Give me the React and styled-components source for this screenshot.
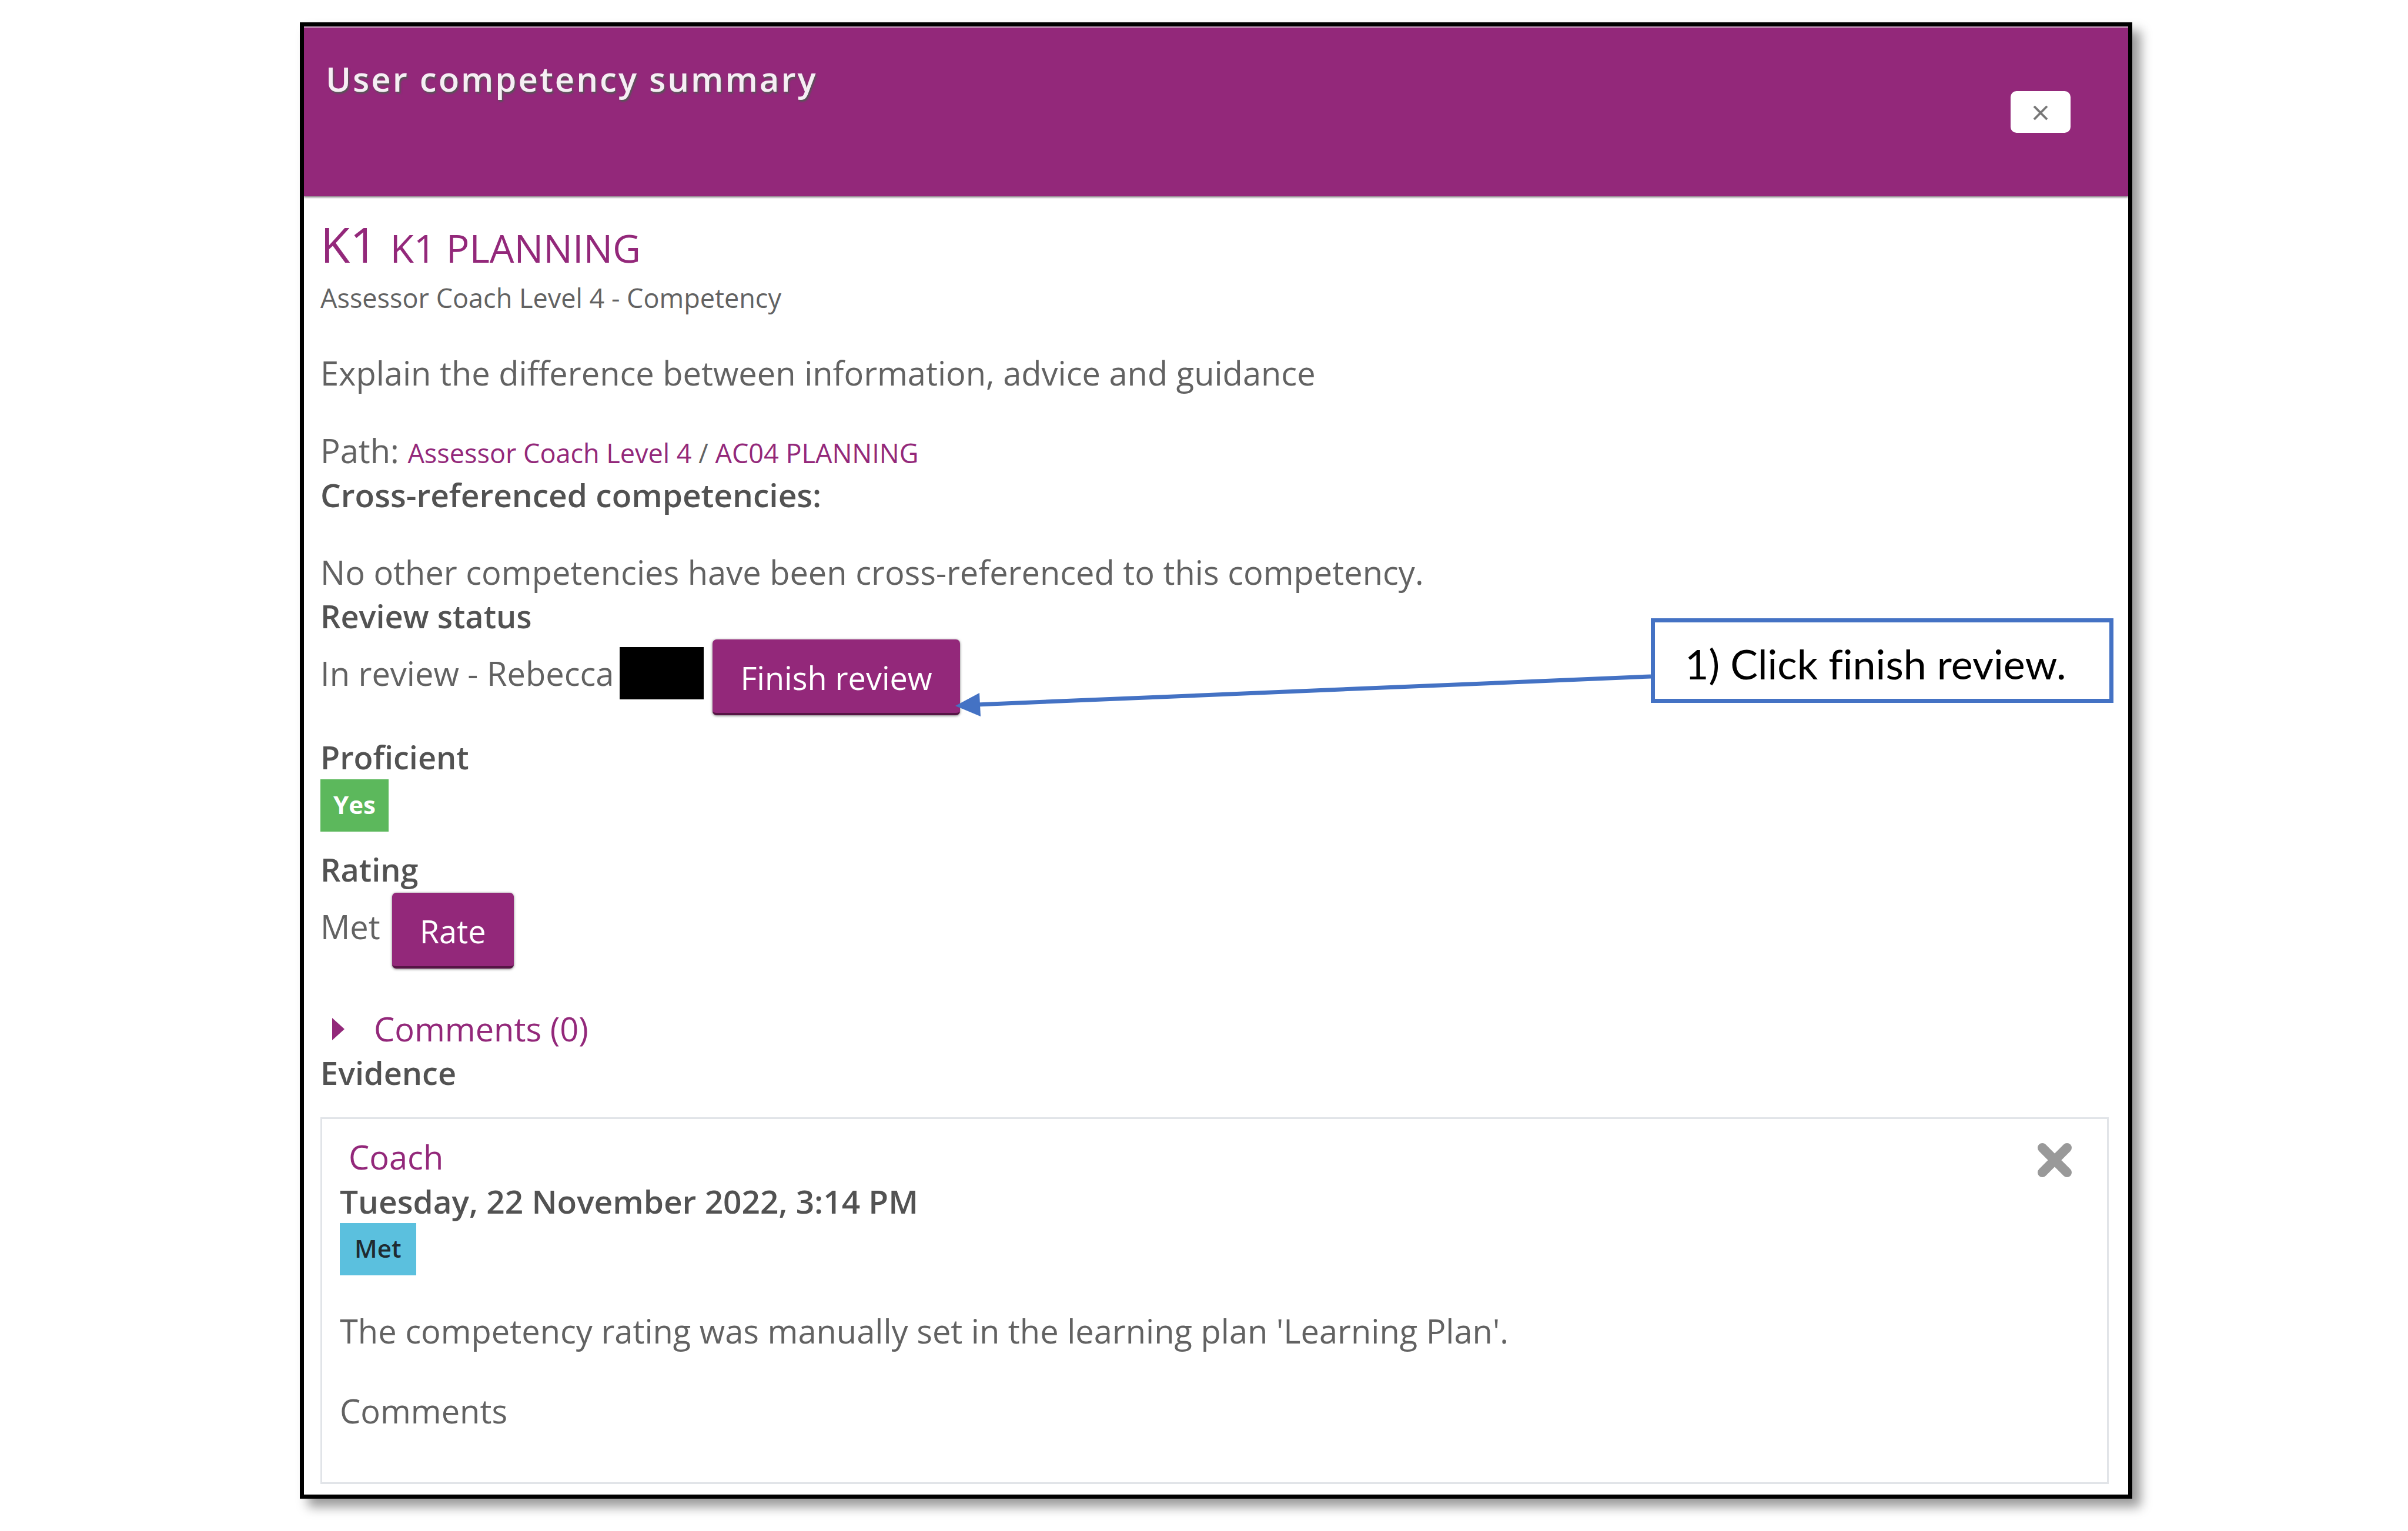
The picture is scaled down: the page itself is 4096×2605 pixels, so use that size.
import React from "react";
import styled, { createGlobalStyle } from "styled-components";

const color = {
  brand: "#93287a",
  brandDark: "#561545",
  text: "#626262",
  heading: "#525252",
  line: "#e1e4e8",
  callout: "#4472c4",
};

const GlobalStyle = createGlobalStyle`
  *, *::before, *::after { box-sizing: border-box; }
  body {
    margin: 0;
    background: #fff;
    color: ${color.text};
    font: 400 56px/75px "Open Sans", "Noto Sans", sans-serif;
  }
  h1, h2, h3, p { margin: 0; }
  button { font: inherit; cursor: pointer; }
`;

const Page = styled.div`
  padding: 38px 469px 51px 510px;
`;

const Dialog = styled.main`
  background: #fff;
  border: 7px solid #000;
  box-shadow: 14px 14px 18px rgba(0, 0, 0, 0.4);
`;

const Header = styled.header`
  display: flex;
  justify-content: space-between;
  align-items: flex-start;
  padding: 47px 98px 108px 37px;
  background: ${color.brand};
  border-top: 2px solid #cfa9c6;
  box-shadow: 0 2px 3px rgba(0, 0, 0, 0.45);
`;

const Title = styled.h1`
  font-size: 58px;
  font-weight: 600;
  line-height: 80px;
  letter-spacing: 3px;
  color: #f6eef4;
  text-shadow: 2px 3px 3px #555;
`;

const CloseButton = styled.button`
  width: 102px;
  height: 71px;
  margin-top: 61px;
  padding: 0;
  border: 0;
  border-radius: 10px;
  background: #fff;
  color: #777;
  line-height: 71px;
`;

const Content = styled.div`
  padding: 31px 33px 18px 28px;
`;

const Name = styled.h2`
  margin-bottom: 9px;
  font-size: 82px;
  font-weight: 400;
  line-height: 100px;
  color: ${color.brand};
`;

const ShortName = styled.span`
  font-size: 66px;
  line-height: 1;
`;

const Framework = styled.p`
  font-size: 45px;
  line-height: 66px;
`;

const Paragraph = styled.p`
  margin-top: ${(p) => p.$space || 57}px;
`;

const Crumbs = styled.span`
  font-size: 45px;
  line-height: 1;
`;

const Link = styled.a`
  color: ${color.brand};
  text-decoration: none;
`;

const Section = styled.section`
  margin-top: ${(p) => p.$space || 0}px;
`;

const Label = styled.h3`
  font-size: ${(p) => (p.$large ? 55 : 54)}px;
  font-weight: 600;
  color: ${color.heading};
`;

const ActionRow = styled.div`
  position: relative;
  display: flex;
  align-items: center;
  gap: ${(p) => p.$gap}px;
  margin-top: 2px;
`;

const Status = styled.div`
  display: flex;
  align-items: center;
  gap: 10px;
  padding-bottom: 14px;
`;

const Redaction = styled.span`
  width: 143px;
  height: 89px;
  background: #000;
`;

const ActionButton = styled.button`
  padding: 28px 47px 22px;
  border: 0;
  border-bottom: 4px solid ${color.brandDark};
  border-radius: 7px;
  background: ${color.brand};
  box-shadow: 0 1px 4px rgba(0, 0, 0, 0.5);
  color: #fff;
  font-size: 54px;
  white-space: nowrap;
`;

const Badge = styled.span`
  display: block;
  width: fit-content;
  padding: 0 ${(p) => (p.$info ? 25 : 22)}px 4px;
  background: ${(p) => (p.$info ? "#5bc0de" : "#5cb85c")};
  color: ${(p) => (p.$info ? "#1f2b30" : "#fff")};
  font-size: 42px;
  font-weight: ${(p) => (p.$info ? 600 : 700)};
  line-height: 85px;
`;

const Toggle = styled.a`
  display: flex;
  align-items: center;
  gap: 50px;
  padding-left: 20px;
  color: ${color.brand};
  text-decoration: none;
`;

const Caret = styled.svg`
  width: 21px;
  height: 38px;
  fill: currentColor;
`;

const EvidenceCard = styled.article`
  margin-top: 38px;
  padding: 27px 30px 84px;
  border: 3px solid ${color.line};
`;

const CardHead = styled.div`
  display: flex;
  justify-content: space-between;
  align-items: flex-start;
  height: 75px;
  padding: 0 29px 0 15px;
`;

const DeleteButton = styled.button`
  padding: 13px 0 0;
  border: 0;
  background: none;
  color: #999;
  line-height: 0;

  svg {
    width: 60px;
    height: 60px;
    fill: none;
    stroke: currentColor;
    stroke-width: 16;
    stroke-linecap: round;
  }
`;

const Annotation = styled.aside`
  position: absolute;
  top: -36px;
  left: 1080px;
  right: -8px;
  display: flex;
  height: 144px;
`;

const Arrow = styled.svg`
  flex: 1;
  min-width: 0;
  height: 100%;
  overflow: visible;
`;

const Callout = styled.p`
  width: 787px;
  padding: 25px 51px;
  border: 7px solid ${color.callout};
  background: #fff;
  color: #000;
  font-family: Lato, "Open Sans", sans-serif;
  font-size: 70px;
  line-height: 90px;
  font-variant-ligatures: none;
  white-space: nowrap;
`;

export default function App() {
  return (
    <Page>
      <GlobalStyle />
      <Dialog>
        <Header>
          <Title>User competency summary</Title>
          <CloseButton type="button" aria-label="Close">×</CloseButton>
        </Header>

        <Content>
          <Name>
            K1 <ShortName>K1 PLANNING</ShortName>
          </Name>
          <Framework>Assessor Coach Level 4 - Competency</Framework>

          <Paragraph>Explain the difference between information, advice and guidance</Paragraph>
          <Paragraph>
            Path:{" "}
            <Crumbs>
              <Link href="#framework">Assessor Coach Level 4</Link> /{" "}
              <Link href="#planning">AC04 PLANNING</Link>
            </Crumbs>
          </Paragraph>

          <Section>
            <Label $large>Cross-referenced competencies:</Label>
            <Paragraph>No other competencies have been cross-referenced to this competency.</Paragraph>
          </Section>

          <Section>
            <Label>Review status</Label>
            <ActionRow $gap={15}>
              <Status>
                In review - Rebecca <Redaction />
              </Status>
              <ActionButton type="button">Finish review</ActionButton>
              <Annotation>
                <Arrow viewBox="0 0 1183 144" preserveAspectRatio="none" aria-hidden="true">
                  <path d="M36 147 L1183 99" stroke={color.callout} strokeWidth="7" />
                  <path d="M0 149 L41 127 L43 167 Z" fill={color.callout} />
                </Arrow>
                <Callout>1) Click finish review.</Callout>
              </Annotation>
            </ActionRow>
          </Section>

          <Section $space={34}>
            <Label>Proficient</Label>
            <Badge>Yes</Badge>
          </Section>

          <Section $space={27}>
            <Label>Rating</Label>
            <ActionRow $gap={20}>
              <Status>Met</Status>
              <ActionButton type="button">Rate</ActionButton>
            </ActionRow>
          </Section>

          <Section $space={65}>
            <Toggle href="#comments">
              <Caret viewBox="0 0 21 38" aria-hidden="true">
                <path d="M0 0 L21 19 L0 38 Z" />
              </Caret>
              Comments (0)
            </Toggle>
          </Section>

          <Section>
            <Label>Evidence</Label>
            <EvidenceCard>
              <CardHead>
                <Link href="#coach">Coach</Link>
                <DeleteButton type="button" aria-label="Delete evidence">
                  <svg viewBox="0 0 60 60" aria-hidden="true">
                    <path d="M9 9 L51 51 M51 9 L9 51" />
                  </svg>
                </DeleteButton>
              </CardHead>
              <Label $large>Tuesday, 22 November 2022, 3:14 PM</Label>
              <Badge $info>Met</Badge>
              <Paragraph>The competency rating was manually set in the learning plan 'Learning Plan'.</Paragraph>
              <Paragraph $space={61}>Comments</Paragraph>
            </EvidenceCard>
          </Section>
        </Content>
      </Dialog>
    </Page>
  );
}
